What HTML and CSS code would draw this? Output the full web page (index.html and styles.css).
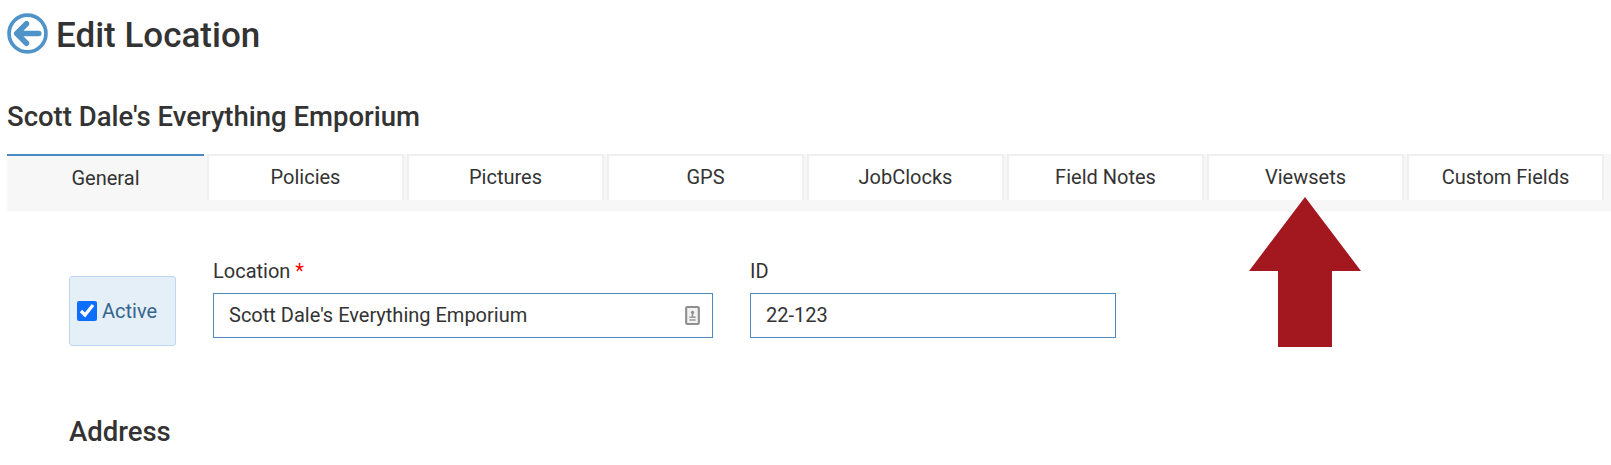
FILE: index.html
```html
<!DOCTYPE html>
<html lang="en">
<head>
<meta charset="utf-8">
<title>Edit Location</title>
<link rel="stylesheet" href="styles.css">
</head>
<body>
<header class="page-head">
  <svg class="back" viewBox="0 0 40 40" aria-hidden="true">
    <circle cx="20" cy="20" r="18" fill="none" stroke="#4f93c8" stroke-width="3.6"/>
    <path d="M19 10.5 9.5 20l9.5 9.5M10.5 20H31" fill="none" stroke="#4f93c8" stroke-width="5.4" stroke-linecap="round" stroke-linejoin="round"/>
  </svg>
  <h1>Edit Location</h1>
</header>
<h2 class="subject">Scott Dale's Everything Emporium</h2>
<nav class="tabs">
  <a class="tab active">General</a>
  <a class="tab">Policies</a>
  <a class="tab">Pictures</a>
  <a class="tab">GPS</a>
  <a class="tab">JobClocks</a>
  <a class="tab">Field Notes</a>
  <a class="tab">Viewsets</a>
  <a class="tab">Custom Fields</a>
</nav>
<main class="content">
  <div class="row">
    <label class="active-box"><input type="checkbox" checked><span>Active</span></label>
    <div class="field field-name">
      <label class="lbl">Location <span class="req">*</span></label>
      <div class="input">Scott Dale's Everything Emporium
        <svg class="card" viewBox="0 0 14 18" aria-hidden="true">
          <rect x="1" y="1" width="12" height="16" rx="1" fill="#f2f2f2" stroke="#8f8f8f" stroke-width="2"/>
          <circle cx="7" cy="6.2" r="1.6" fill="#8f8f8f"/>
          <path d="M6.2 6h1.6v4H6.2zM4 10h6v1.4H4zM4 12.6h6v1.4H4z" fill="#9a9a9a"/>
        </svg>
      </div>
    </div>
    <div class="field field-id">
      <label class="lbl">ID</label>
      <div class="input">22-123</div>
    </div>
  </div>
  <h2 class="section">Address</h2>
</main>
<svg class="arrow" viewBox="0 0 112 150" aria-hidden="true">
  <path d="M56 0 112 74H83V150H29V74H0Z" fill="#a3181f"/>
</svg>
</body>
</html>
```

FILE: styles.css
```css
* { box-sizing: border-box; }
html, body { height: 100%; }
body {
  margin: 0;
  height: 465px;
  overflow: hidden;
  background: #fff;
  color: #333;
  font-family: Roboto, "Liberation Sans", sans-serif;
  position: relative;
}
.page-head {
  display: flex;
  align-items: center;
  gap: 8px;
  padding: 14px 0 0 7px;
  height: 54px;
}
.back { width: 41px; height: 41px; flex: none; margin-top: -1px; }
h1 {
  margin: 4px 0 0;
  font-size: 35px;
  font-weight: 500;
  line-height: 40px;
}
.subject {
  margin: 45px 0 0 7px;
  font-size: 27.5px;
  font-weight: 500;
  line-height: 36px;
}
.tabs {
  display: flex;
  gap: 3px;
  margin: 19px 0 0 7px;
  padding-bottom: 11px;
  height: 57px;
  background: #f7f7f7;
}
.tab {
  width: 197px;
  height: 46px;
  background: #fff;
  border: 2px solid #f0f0f0;
  border-bottom: 0;
  font-size: 20px;
  line-height: 42px;
  text-align: center;
}
.tab.active {
  background: #f7f7f7;
  border: 0;
  border-top: 2px solid #4b8bbf;
  line-height: 44px;
}
.content { padding: 0 0 0 69px; }
.row {
  display: flex;
  align-items: flex-end;
  gap: 37px;
  padding-top: 48px;
}
.active-box {
  display: flex;
  align-items: center;
  gap: 5px;
  width: 107px;
  height: 70px;
  padding-left: 7px;
  background: #e4eff8;
  border: 1px solid #bdd7ee;
  border-radius: 3px;
  color: #35648c;
  font-size: 20px;
}
.active-box input {
  width: 20px;
  height: 20px;
  margin: 0;
  accent-color: #0d6efd;
}
.field { display: flex; flex-direction: column; margin-bottom: 8px; }
.field-name { width: 500px; }
.field-id { width: 366px; }
.lbl { font-size: 20px; line-height: 24px; margin-bottom: 10px; }
.req { color: #f00; }
.input {
  position: relative;
  height: 45px;
  padding-left: 15px;
  border: 1px solid #4b8bbf;
  font-size: 20px;
  line-height: 43px;
}
.card {
  position: absolute;
  right: 12px;
  top: 12px;
  width: 15px;
  height: 19px;
}
.section {
  margin: 68px 0 0 0;
  font-size: 27.5px;
  font-weight: 500;
  line-height: 36px;
}
.arrow {
  position: absolute;
  left: 1249px;
  top: 197px;
  width: 112px;
  height: 150px;
}
```
